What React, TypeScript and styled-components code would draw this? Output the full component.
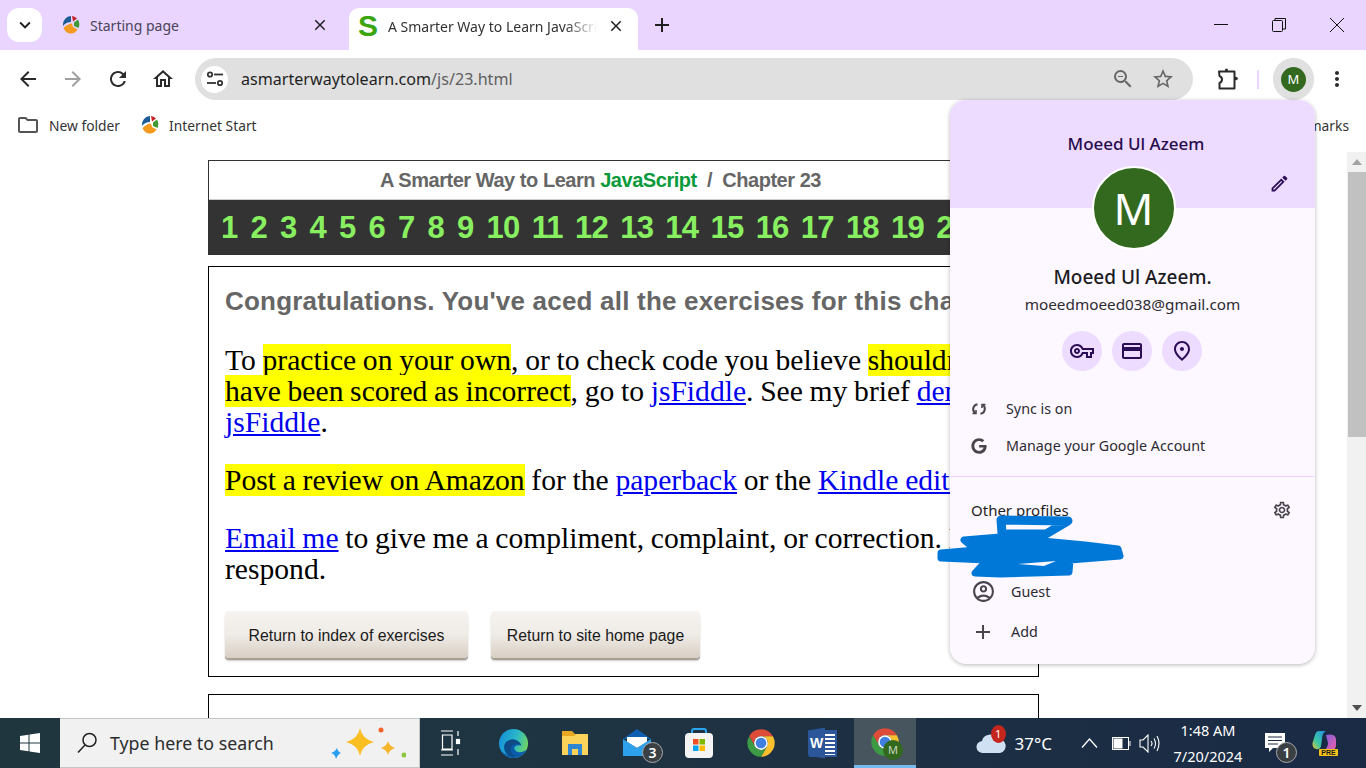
import React from 'react'
import styled, { createGlobalStyle } from 'styled-components'
import {
  MdAdd,
  MdArrowBack,
  MdArrowForward,
  MdClose,
  MdKeyboardArrowDown,
  MdMoreVert,
  MdOutlineAccountCircle,
  MdOutlineCreditCard,
  MdOutlineEdit,
  MdOutlineFolder,
  MdOutlineHome,
  MdOutlinePlace,
  MdOutlineSettings,
  MdOutlineVpnKey,
  MdRefresh,
  MdStarBorder,
  MdZoomOut,
} from 'react-icons/md'
import { FaGoogle } from 'react-icons/fa'

const uiFont = `"Noto Sans", "Open Sans", sans-serif`

const GlobalStyle = createGlobalStyle`
  html, body { margin: 0; padding: 0; height: 100%; overflow: hidden; background: #fff; }
  * { box-sizing: border-box; }
`

const Screen = styled.div`
  position: relative;
  width: 1366px;
  height: 768px;
  overflow: hidden;
  display: flex;
  flex-direction: column;
  font-family: ${uiFont};
`

/* tab strip */
const TabStrip = styled.div`
  height: 50px;
  flex: none;
  background: #e9d5ff;
  display: flex;
  align-items: flex-end;
  padding-left: 7px;
`
const TabSearch = styled.div`
  width: 35px;
  height: 34px;
  margin-bottom: 8px;
  background: #fff;
  border-radius: 12px;
  display: flex;
  align-items: center;
  justify-content: center;
  font-size: 22px;
  color: #1f1f1f;
`
const Tab = styled.div<{ $active?: boolean }>`
  width: ${(p) => (p.$active ? '289px' : '307px')};
  height: 42px;
  display: flex;
  align-items: center;
  padding: ${(p) => (p.$active ? '0 8px 6px 8px' : '0 15px 8px 20px')};
  background: ${(p) => (p.$active ? '#fff' : 'transparent')};
  border-radius: 10px 10px 0 0;
  font-size: 14px;
  color: ${(p) => (p.$active ? '#333' : '#4a4458')};
  flex: none;
`
const TabTitle = styled.span<{ $gap: number }>`
  flex: 1;
  margin-left: ${(p) => p.$gap}px;
  white-space: nowrap;
  overflow: hidden;
`
const FadedTitle = styled(TabTitle)`
  -webkit-mask-image: linear-gradient(90deg, #000 82%, transparent 97%);
  mask-image: linear-gradient(90deg, #000 82%, transparent 97%);
`
const TabClose = styled.span`
  width: 24px;
  height: 24px;
  flex: none;
  margin-right: 2px;
  display: flex;
  align-items: center;
  justify-content: center;
  font-size: 18px;
  color: #222;
`
const SFavicon = styled.span`
  font: bold 30px/30px "Liberation Sans", sans-serif;
  color: #3ba510;
  width: 22px;
  flex: none;
  text-align: center;
`
const NewTab = styled.span`
  margin: 0 0 13px 12px;
  font-size: 24px;
  display: flex;
  color: #1f1f1f;
`
const WindowControls = styled.div`
  margin-left: auto;
  display: flex;
  height: 50px;
  align-items: center;
`
const WindowButton = styled.span`
  width: 58px;
  height: 50px;
  display: flex;
  align-items: center;
  justify-content: center;
  color: #111;
`

/* toolbar */
const Toolbar = styled.div`
  height: 58px;
  flex: none;
  background: #fff;
  display: flex;
  align-items: center;
  padding-left: 5px;
  border-radius: 10px 10px 0 0;
`
const ToolButton = styled.span<{ $w?: number; $muted?: boolean }>`
  width: ${(p) => p.$w ?? 45}px;
  height: 42px;
  flex: none;
  display: flex;
  align-items: center;
  justify-content: center;
  font-size: 24px;
  color: ${(p) => (p.$muted ? '#a0a0a0' : '#2b2b2b')};
`
const Omnibox = styled.div`
  width: 998px;
  height: 42px;
  margin: 0 7px 0 10px;
  flex: none;
  border-radius: 21px;
  background: #e0e0e0;
  display: flex;
  align-items: center;
  padding: 0 18px 0 6px;
`
const SiteChip = styled.span`
  width: 27px;
  height: 27px;
  border-radius: 50%;
  background: #fff;
  flex: none;
  display: flex;
  align-items: center;
  justify-content: center;
`
const UrlText = styled.span`
  margin-left: 13px;
  font-size: 16.1px;
  color: #1f1f1f;
  flex: 1;
  white-space: nowrap;
`
const UrlPath = styled.span`
  color: #5f5f5f;
`
const OmniIcon = styled.span`
  font-size: 24px;
  display: flex;
  color: #666;
  margin-left: 16px;
`
const ToolDivider = styled.span`
  width: 2px;
  height: 19px;
  background: #e9d5ff;
  margin: 0 14px 0 3px;
  flex: none;
`
const AvatarChip = styled.span`
  width: 41px;
  height: 42px;
  border-radius: 21px;
  background: #e0e0e0;
  flex: none;
  display: flex;
  align-items: center;
  justify-content: center;
`
const SmallAvatar = styled.span`
  width: 25px;
  height: 25px;
  border-radius: 50%;
  background: #33691e;
  color: #fff;
  font-size: 13px;
  display: flex;
  align-items: center;
  justify-content: center;
`

/* bookmarks */
const Bookmarks = styled.div`
  height: 34px;
  flex: none;
  background: #fff;
  display: flex;
  align-items: center;
  padding: 0 17px 0 18px;
  font-size: 13.8px;
  color: #333;
`
const Bookmark = styled.span`
  display: flex;
  align-items: center;
  gap: 10px;
  margin-right: 21px;
  white-space: nowrap;
`
const FolderIcon = styled(MdOutlineFolder)`
  font-size: 24px;
  margin: 0 -1px 0 -2px;
  color: #555;
`
const AllBookmarks = styled.span`
  margin-left: auto;
`

/* page */
const Viewport = styled.div`
  flex: 1;
  min-height: 0;
  display: flex;
  background: #fff;
`
const Page = styled.div`
  flex: 1;
  min-width: 0;
  overflow: hidden;
  padding: 18px 0 0 208px;
`
const TitleBox = styled.div`
  width: 831px;
  border: 1px solid #333;
  border-bottom: 0;
  overflow: hidden;
`
const PageTitle = styled.div`
  height: 39px;
  padding-right: 46px;
  text-align: center;
  font: bold 20px/38px "Liberation Sans", sans-serif;
  color: #666;
  letter-spacing: -0.46px;
  border-bottom: 1px solid #ccc;
`
const JsWord = styled.span`
  color: #0a9a3c;
`
const ChapterNav = styled.div`
  height: 55px;
  margin: 0 -1px;
  background: #333;
  display: flex;
  align-items: center;
  gap: 12.25px;
  padding-left: 13px;
  overflow: hidden;
  font: bold 31px/55px "Liberation Sans", sans-serif;
  color: #88f060;
  white-space: nowrap;
`
const ChapterLink = styled.span<{ $wide: boolean }>`
  flex: none;
  letter-spacing: ${(p) => (p.$wide ? '-0.8px' : '0')};
`
const ContentBox = styled.div`
  width: 831px;
  height: 411px;
  margin-top: 11px;
  border: 1px solid #000;
  padding: 18px 16px 0;
`
const CongratsTitle = styled.h2`
  margin: 0 0 28px;
  font: bold 26px/32px "Liberation Sans", sans-serif;
  letter-spacing: 0.2px;
  color: #666;
  white-space: nowrap;
`
const BodyText = styled.p`
  margin: 0 0 27px;
  font: 29.6px/31px "Liberation Serif", serif;
  word-spacing: -0.7px;
  color: #000;
`
const Highlight = styled.span`
  background: #ff0;
`
const PageLink = styled.a`
  color: #00e;
  text-decoration: underline;
`
const ButtonRow = styled.div`
  display: flex;
  gap: 23px;
  margin-top: -1px;
`
const ReturnButton = styled.div<{ $w: number }>`
  width: ${(p) => p.$w}px;
  height: 47px;
  border-radius: 4px;
  background: linear-gradient(#f6f3f0 0%, #efebe6 50%, #d8cfc4 100%);
  box-shadow: 0 2px 0 #a89f93, 0 3px 2px #ccc;
  font: 15.8px/49px "Liberation Sans", sans-serif;
  color: #1a1a1a;
  text-align: center;
`
const NextBox = styled.div`
  width: 831px;
  height: 60px;
  margin-top: 17px;
  border: 1px solid #000;
`

/* scrollbar */
const Scrollbar = styled.div`
  width: 19px;
  flex: none;
  margin-top: 10px;
  background: #f1f1f1;
  display: flex;
  flex-direction: column;
`
const ScrollArrow = styled.div<{ $down?: boolean }>`
  height: 20px;
  flex: none;
  display: flex;
  align-items: center;
  justify-content: center;
  margin-top: ${(p) => (p.$down ? 'auto' : '0')};
  &::after {
    content: '';
    border-left: 5px solid transparent;
    border-right: 5px solid transparent;
    ${(p) => (p.$down ? 'border-top: 6px solid #505050;' : 'border-bottom: 6px solid #a3a3a3;')}
  }
`
const ScrollThumb = styled.div`
  height: 265px;
  margin-left: 1px;
  background: #c1c1c1;
  flex: none;
`

/* profile menu */
const ProfileMenu = styled.div`
  position: absolute;
  left: 950px;
  top: 100px;
  width: 365px;
  height: 564px;
  background: #fdf8ff;
  border-radius: 16px;
  box-shadow: 0 1px 4px rgba(0, 0, 0, 0.28);
  overflow: hidden;
  color: #1f1f1f;
`
const MenuHeader = styled.div`
  position: relative;
  height: 108px;
  background: #eddcff;
  padding: 31px 0 0 7px;
  text-align: center;
  font-size: 17px;
  font-weight: 500;
  line-height: 26px;
  color: #260b4d;
`
const EditIcon = styled(MdOutlineEdit)`
  position: absolute;
  right: 25px;
  top: 73px;
  font-size: 21px;
  color: #2b0d55;
`
const BigAvatar = styled.div`
  width: 84px;
  height: 84px;
  margin: -42px auto 0;
  position: relative;
  left: 1px;
  border-radius: 50%;
  border: 2px solid #fff;
  background: #33691e;
  color: #fff;
  font-size: 44px;
  line-height: 80px;
  text-align: center;
`
const ProfileName = styled.div`
  margin-top: 14px;
  text-align: center;
  font-size: 19px;
  font-weight: 500;
  line-height: 26px;
  color: #1c1b1f;
`
const ProfileEmail = styled.div`
  margin-top: 3px;
  text-align: center;
  font-size: 15.3px;
  line-height: 22px;
  color: #2d2b32;
`
const ActionRow = styled.div`
  margin-top: 16px;
  padding-right: 2px;
  display: flex;
  justify-content: center;
  gap: 10px;
`
const ActionButton = styled.span`
  width: 40px;
  height: 40px;
  border-radius: 50%;
  background: #eddcff;
  display: flex;
  align-items: center;
  justify-content: center;
  font-size: 24px;
  color: #2b0d55;
`
const MenuList = styled.div`
  margin-top: 19px;
`
const MenuRow = styled.div`
  height: 37px;
  display: flex;
  align-items: center;
  padding-left: 21px;
  font-size: 14.3px;
  color: #2d2b32;
`
const RowIcon = styled.span<{ $w: number; $size?: number }>`
  width: ${(p) => p.$w}px;
  flex: none;
  display: flex;
  color: #49454f;
  font-size: ${(p) => p.$size ?? 22}px;
`
const MenuDivider = styled.div`
  height: 1px;
  margin-top: 12px;
  background: #e9d5ff;
`
const ProfilesHead = styled.div`
  height: 20px;
  margin-top: 23px;
  padding: 0 23px 0 21px;
  display: flex;
  align-items: center;
  justify-content: space-between;
  font-size: 15px;
  color: #1f1f1f;
`
const GearIcon = styled(MdOutlineSettings)`
  font-size: 20px;
  color: #49454f;
`
const ProfileRows = styled.div`
  margin-top: 53px;
  display: flex;
  flex-direction: column;
  gap: 3px;
`

const Scribble = styled.svg`
  position: absolute;
  left: 930px;
  top: 510px;
  width: 200px;
  height: 75px;
`

/* taskbar */
const Taskbar = styled.div`
  height: 50px;
  flex: none;
  display: flex;
  align-items: stretch;
  background: linear-gradient(90deg, #20363f 0%, #1f3442 40%, #1a2a45 100%);
  color: #fff;
`
const StartButton = styled.div`
  width: 60px;
  flex: none;
  display: flex;
  align-items: center;
  justify-content: center;
`
const SearchBox = styled.div`
  position: relative;
  width: 360px;
  flex: none;
  background: #f1f1f1;
  border: solid #c5c5c5;
  border-width: 1px 1px 1px 0;
  display: flex;
  align-items: center;
  padding-left: 15px;
  color: #2c2c2c;
  font-size: 17.8px;
`
const SearchText = styled.span`
  margin-left: 11px;
  white-space: nowrap;
`
const Sparkles = styled.svg`
  position: absolute;
  left: 268px;
  top: 6px;
  width: 78px;
  height: 40px;
`
const TaskSlot = styled.div<{ $active?: boolean }>`
  position: relative;
  width: 62px;
  flex: none;
  display: flex;
  align-items: center;
  justify-content: center;
  background: ${(p) => (p.$active ? '#47555f' : 'transparent')};
  border-bottom: ${(p) => (p.$active ? '3px solid #76b9ed' : '0')};
`
const CountBadge = styled.span<{ $right: number; $bottom: number }>`
  position: absolute;
  right: ${(p) => p.$right}px;
  bottom: ${(p) => p.$bottom}px;
  width: 21px;
  height: 21px;
  border-radius: 50%;
  background: #3a3f44;
  border: 1px solid #aaa;
  font-size: 14px;
  font-weight: 600;
  line-height: 19px;
  text-align: center;
  color: #fff;
`
const ChromeAvatar = styled.span`
  position: absolute;
  left: 29px;
  top: 22px;
  width: 20px;
  height: 20px;
  border-radius: 50%;
  background: #33691e;
  color: #c8d8c0;
  font-size: 11px;
  line-height: 20px;
  text-align: center;
`
const Tray = styled.div`
  margin-left: auto;
  display: flex;
  align-items: center;
  padding-right: 28px;
`
const Weather = styled.div`
  position: relative;
  display: flex;
  align-items: center;
  gap: 9px;
  font-size: 17px;
  margin-right: 29px;
`
const WeatherBadge = styled.span`
  position: absolute;
  left: 16px;
  top: -7px;
  width: 15px;
  height: 18px;
  border-radius: 50%;
  background: #c4261d;
  font-size: 11px;
  line-height: 18px;
  text-align: center;
`
const TrayIcon = styled.span<{ $gap: number }>`
  display: flex;
  margin-right: ${(p) => p.$gap}px;
`
const Clock = styled.div`
  width: 70px;
  margin-left: 13px;
  text-align: center;
  font-size: 14.5px;
  line-height: 26px;
  white-space: nowrap;
`
const Notice = styled.div`
  position: relative;
  margin: 0 27px 0 22px;
  display: flex;
`
const CopilotMark = styled.span`
  position: relative;
  width: 26px;
  height: 26px;
  display: block;
`
const PreBadge = styled.span`
  position: absolute;
  right: 0;
  bottom: 0;
  width: 19px;
  height: 7px;
  border-radius: 1px;
  background: #f7c21a;
  font: bold 7px/7px "Liberation Sans", sans-serif;
  color: #1a1a1a;
  text-align: center;
`

const BallIcon = () => (
  <svg width="18" height="20" viewBox="0 0 18 20">
    <path d="M1 11 A8 9 0 0 1 9 1 L9 7 Q4 7 1 11Z" fill="#1c5d96" />
    <path d="M10 1 A8 9 0 0 1 15 3.500 L11 6.500Z" fill="#c8232c" />
    <path d="M16 4.500 A8 9 0 0 1 16.500 13 L12 11 L12 7.500Z" fill="#3f9a35" />
    <path d="M1.500 13 Q6 8.500 10 8.500 L11 12 L15.500 14.500 A8 9 0 0 1 1.500 13Z" fill="#f39a1f" />
  </svg>
)

const ChromeLogo = ({ size = 30 }: { size?: number }) => (
  <svg width={size} height={size} viewBox="0 0 48 48">
    <path d="M24 2A22 22 0 0 0 5 13L14.500 29.500A11 11 0 0 1 24 13H43A22 22 0 0 0 24 2Z" fill="#dd4b39" />
    <path d="M43 13H24A11 11 0 0 1 33.500 29.500L24 46A22 22 0 0 0 43 13Z" fill="#fbc02d" />
    <path d="M5 13A22 22 0 0 0 24 46L33.500 29.500A11 11 0 0 1 14.500 29.500Z" fill="#3d9b45" />
    <circle cx="24" cy="24" r="11" fill="#fff" />
    <circle cx="24" cy="24" r="8.500" fill="#3f7fe0" />
  </svg>
)

const EdgeLogo = () => (
  <svg width="31" height="31" viewBox="0 0 32 32">
    <defs>
      <linearGradient id="edgeTop" x1="0" y1="0.300" x2="1" y2="0.600">
        <stop offset="0" stopColor="#1490d8" />
        <stop offset="0.550" stopColor="#2bb8c8" />
        <stop offset="1" stopColor="#74d85c" />
      </linearGradient>
    </defs>
    <circle cx="16" cy="16" r="15" fill="url(#edgeTop)" />
    <path d="M1 16C1 25 8 31 16 31C22 31 27 28 30 22C25 26 19 26 17 22C16 19 19 17 24 18C22 12 14 10 9 14C5 17 5 24 10 28C5 26 1 22 1 16Z" fill="#0b5cab" />
    <path d="M24 18C22 12 14 10 9 14C6 17 6 23 10 27C12 29 16 30 18 29C13 27 12 22 14 19C16 16 21 16 24 18Z" fill="#0d4a86" />
  </svg>
)

const FolderLogo = () => (
  <svg width="28" height="28" viewBox="0 0 28 28">
    <path d="M1 2H11L14 5H27V26H1Z" fill="#e8a920" />
    <path d="M1 7H13L15 5H27V26H1Z" fill="#fbd25a" />
    <path d="M7 26V15H21V26H17V20H11V26Z" fill="#2f86d4" />
  </svg>
)

const MailLogo = () => (
  <svg width="30" height="30" viewBox="0 0 30 30">
    <path d="M1 11L15 1L29 11Z" fill="#0f5fb0" />
    <path d="M5 9H25V14L15 20L5 14Z" fill="#fff" />
    <path d="M1 11L15 20L29 11V28H1Z" fill="#2da1ec" />
  </svg>
)

const StoreLogo = () => (
  <svg width="30" height="30" viewBox="0 0 30 30">
    <path d="M8 7V3Q8 1 10 1H20Q22 1 22 3V7" fill="none" stroke="#2aa5ee" strokeWidth="2" />
    <rect x="1" y="5" width="28" height="25" rx="4" fill="#f4f4f4" />
    <rect x="9" y="11" width="5.500" height="5.500" fill="#f25022" />
    <rect x="15.500" y="11" width="5.500" height="5.500" fill="#7fba00" />
    <rect x="9" y="17.500" width="5.500" height="5.500" fill="#00a4ef" />
    <rect x="15.500" y="17.500" width="5.500" height="5.500" fill="#ffb900" />
  </svg>
)

const WordLogoBox = styled.span`
  position: relative;
  width: 28px;
  height: 27px;
  display: block;
  background: repeating-linear-gradient(#fff 0 2px, #2b579a 2px 4px);
  outline: 2px solid #2b579a;
  outline-offset: -2px;
`
const WordLetter = styled.span`
  position: absolute;
  left: -1px;
  top: -2px;
  width: 17px;
  height: 31px;
  background: #2b579a;
  clip-path: polygon(0 3px, 100% 0, 100% 100%, 0 calc(100% - 3px));
  font: bold 14px/31px "Liberation Sans", sans-serif;
  color: #fff;
  text-align: center;
`

const PuzzleGlyph = () => (
  <svg width="24" height="24" viewBox="0 0 24 24" fill="none" stroke="#2b2b2b" strokeWidth="2" strokeLinejoin="round">
    <path d="M4 4.500H19.500V21.500H4.500V16Q7 15 7 12.500Q7 10 4.500 9Z" />
    <circle cx="11.500" cy="3" r="1.500" fill="#2b2b2b" stroke="none" />
    <circle cx="21" cy="11.500" r="1.800" fill="#2b2b2b" stroke="none" />
  </svg>
)

const SyncGlyph = () => (
  <svg width="16" height="16" viewBox="0 0 16 16" fill="none" stroke="#49454f" strokeWidth="2">
    <path d="M6.500 3.200A5 5 0 0 0 4 12" />
    <path d="M9.500 12.800A5 5 0 0 0 12 4" />
    <path d="M1.500 12.500H5V9M14.500 3.500H11V7" strokeWidth="1.600" />
  </svg>
)

const Tune = () => (
  <svg width="18" height="16" viewBox="0 0 18 16" fill="none" stroke="#333" strokeWidth="1.800">
    <circle cx="4" cy="3.500" r="2.200" />
    <path d="M8 3.500H17" />
    <circle cx="14" cy="12" r="2.200" />
    <path d="M1 12H10" />
  </svg>
)

const chapters = Array.from({ length: 24 }, (_, i) => i + 1)

export default function App() {
  return (
    <Screen>
      <GlobalStyle />
      <TabStrip>
        <TabSearch><MdKeyboardArrowDown /></TabSearch>
        <Tab>
          <BallIcon />
          <TabTitle $gap={10}>Starting page</TabTitle>
          <TabClose><MdClose /></TabClose>
        </Tab>
        <Tab $active>
          <SFavicon>S</SFavicon>
          <FadedTitle $gap={9}>A Smarter Way to Learn JavaScript</FadedTitle>
          <TabClose><MdClose /></TabClose>
        </Tab>
        <NewTab><MdAdd /></NewTab>
        <WindowControls>
          <WindowButton>
            <svg width="14" height="2"><rect width="14" height="1" fill="#111" /></svg>
          </WindowButton>
          <WindowButton>
            <svg width="14" height="14" fill="none" stroke="#111">
              <rect x="0.500" y="2.500" width="10" height="11" rx="1" />
              <path d="M3 2.500V.500H13.500V11H11" />
            </svg>
          </WindowButton>
          <WindowButton>
            <svg width="14" height="14" stroke="#111"><path d="M0 0L14 14M14 0L0 14" /></svg>
          </WindowButton>
        </WindowControls>
      </TabStrip>

      <Toolbar>
        <ToolButton><MdArrowBack /></ToolButton>
        <ToolButton $muted><MdArrowForward /></ToolButton>
        <ToolButton><MdRefresh /></ToolButton>
        <ToolButton><MdOutlineHome /></ToolButton>
        <Omnibox>
          <SiteChip><Tune /></SiteChip>
          <UrlText>asmarterwaytolearn.com<UrlPath>/js/23.html</UrlPath></UrlText>
          <OmniIcon><MdZoomOut /></OmniIcon>
          <OmniIcon><MdStarBorder /></OmniIcon>
        </Omnibox>
        <ToolButton $w={54}><PuzzleGlyph /></ToolButton>
        <ToolDivider />
        <AvatarChip><SmallAvatar>M</SmallAvatar></AvatarChip>
        <ToolButton $w={46}><MdMoreVert /></ToolButton>
      </Toolbar>

      <Bookmarks>
        <Bookmark><FolderIcon />New folder</Bookmark>
        <Bookmark><BallIcon />Internet Start</Bookmark>
        <AllBookmarks>All Bookmarks</AllBookmarks>
      </Bookmarks>

      <Viewport>
        <Page>
          <TitleBox>
            <PageTitle>A Smarter Way to Learn <JsWord>JavaScript</JsWord> &nbsp;/&nbsp; Chapter 23</PageTitle>
            <ChapterNav>
              {chapters.map((n) => <ChapterLink key={n} $wide={n > 9}>{n}</ChapterLink>)}
            </ChapterNav>
          </TitleBox>
          <ContentBox>
            <CongratsTitle>Congratulations. You've aced all the exercises for this chapter.</CongratsTitle>
            <BodyText>
              To <Highlight>practice on your own</Highlight>, or to check code you believe <Highlight>shouldn't have been scored as incorrect</Highlight>, go to <PageLink>jsFiddle</PageLink>. See my brief <PageLink>demo of jsFiddle</PageLink>.
            </BodyText>
            <BodyText>
              <Highlight>Post a review on Amazon</Highlight> for the <PageLink>paperback</PageLink> or the <PageLink>Kindle edition</PageLink>.
            </BodyText>
            <BodyText>
              <PageLink>Email me</PageLink> to give me a compliment, complaint, or correction. I'll respond.
            </BodyText>
            <ButtonRow>
              <ReturnButton $w={243}>Return to index of exercises</ReturnButton>
              <ReturnButton $w={209}>Return to site home page</ReturnButton>
            </ButtonRow>
          </ContentBox>
          <NextBox />
        </Page>
        <Scrollbar>
          <ScrollArrow />
          <ScrollThumb />
          <ScrollArrow $down />
        </Scrollbar>
      </Viewport>

      <Taskbar>
        <StartButton>
          <svg width="20" height="20" viewBox="0 0 20 20" fill="#fff">
            <path d="M0 3L8.500 1.800V9.500H0ZM9.500 1.600L20 0V9.500H9.500ZM0 10.500H8.500V18.200L0 17ZM9.500 10.500H20V20L9.500 18.400Z" />
          </svg>
        </StartButton>
        <SearchBox>
          <svg width="24" height="24" viewBox="0 0 24 24" fill="none" stroke="#222" strokeWidth="1.500">
            <circle cx="14.500" cy="9" r="6.500" />
            <path d="M10 14L3 21.500" />
          </svg>
          <SearchText>Type here to search</SearchText>
          <Sparkles viewBox="0 0 78 40">
            <path d="M32 3Q34 14 46 17Q34 20 32 31Q30 20 18 17Q30 14 32 3Z" fill="#fbbf24" />
            <path d="M60 16Q61 21 67 23Q61 25 60 30Q59 25 53 23Q59 21 60 16Z" fill="#f5b52a" />
            <path d="M9 23Q10 27 13 28Q10 29 8 34Q7 29 3 28Q7 27 9 23Z" fill="#2a9ff0" />
            <circle cx="53" cy="5" r="2.500" fill="#f4632a" />
            <circle cx="76" cy="30" r="2.500" fill="#8cc63f" />
          </Sparkles>
        </SearchBox>
        <TaskSlot>
          <svg width="22" height="26" viewBox="0 0 22 26" fill="none" stroke="#fff" strokeWidth="1.200">
            <path d="M1 1H13M1 25H13M1 20H13M2.500 5H12V19H2.500ZM18 1V6M18 19V25" />
            <rect x="16.500" y="9.500" width="3" height="4" fill="#fff" />
          </svg>
        </TaskSlot>
        <TaskSlot><EdgeLogo /></TaskSlot>
        <TaskSlot><FolderLogo /></TaskSlot>
        <TaskSlot>
          <MailLogo />
          <CountBadge $right={5} $bottom={5}>3</CountBadge>
        </TaskSlot>
        <TaskSlot><StoreLogo /></TaskSlot>
        <TaskSlot><ChromeLogo /></TaskSlot>
        <TaskSlot>
          <WordLogoBox><WordLetter>W</WordLetter></WordLogoBox>
        </TaskSlot>
        <TaskSlot $active>
          <ChromeLogo />
          <ChromeAvatar>M</ChromeAvatar>
        </TaskSlot>
        <Tray>
          <Weather>
            <svg width="31" height="22" viewBox="0 0 31 22">
              <path d="M8 21A6 6 0 0 1 7 9A8 8 0 0 1 22 7A7 7 0 0 1 25 21Z" fill="#cfe0f3" />
            </svg>
            <WeatherBadge>1</WeatherBadge>
            37°C
          </Weather>
          <TrayIcon $gap={14}>
            <svg width="17" height="10" fill="none" stroke="#fff" strokeWidth="1.300"><path d="M1 9.500L8.500 1L16 9.500" /></svg>
          </TrayIcon>
          <TrayIcon $gap={8}>
            <svg width="19" height="13" fill="none" stroke="#fff"><rect x="0.500" y="0.500" width="16" height="12" /><rect x="2" y="2" width="8" height="9" fill="#fff" /><path d="M18 4V9" /></svg>
          </TrayIcon>
          <TrayIcon $gap={0}>
            <svg width="21" height="19" viewBox="0 0 21 19" fill="none" stroke="#fff" strokeWidth="1.100">
              <path d="M1 6H4L9 1V18L4 13H1Z" />
              <path d="M12 7Q14 9.500 12 12M15 4.500Q18 9.500 15 14.500M18 2Q22 9.500 18 17" />
            </svg>
          </TrayIcon>
          <Clock>1:48 AM<br />7/20/2024</Clock>
          <Notice>
            <svg width="20" height="20" viewBox="0 0 20 20">
              <path d="M0 0H20V15H8L4 19V15H0Z" fill="#fff" />
              <path d="M3 4H17M3 7.500H17M3 11H13" stroke="#1a2a45" />
            </svg>
            <CountBadge $right={-12} $bottom={-10}>1</CountBadge>
          </Notice>
          <CopilotMark>
            <svg width="26" height="22" viewBox="0 0 26 22">
              <defs>
                <linearGradient id="copLeft" x1="0" y1="1" x2="1" y2="0">
                  <stop offset="0" stopColor="#f2c230" />
                  <stop offset="0.350" stopColor="#3fc8a0" />
                  <stop offset="1" stopColor="#1f8fe8" />
                </linearGradient>
                <linearGradient id="copRight" x1="0" y1="0" x2="1" y2="1">
                  <stop offset="0" stopColor="#7a5fe0" />
                  <stop offset="1" stopColor="#ee5fa8" />
                </linearGradient>
              </defs>
              <path d="M7 1H14Q10 3 10 9L9 16Q8 20 4 19Q0 18 0.500 13L3 5Q4 1 7 1Z" fill="url(#copLeft)" />
              <path d="M14 5Q18 4 21 5Q24 6 24 10V15Q24 20 19 20H12Q16 18 16 13Z" fill="url(#copRight)" />
            </svg>
            <PreBadge>PRE</PreBadge>
          </CopilotMark>
        </Tray>
      </Taskbar>

      <ProfileMenu>
        <MenuHeader>
          Moeed Ul Azeem
          <EditIcon />
        </MenuHeader>
        <BigAvatar>M</BigAvatar>
        <ProfileName>Moeed Ul Azeem.</ProfileName>
        <ProfileEmail>moeedmoeed038@gmail.com</ProfileEmail>
        <ActionRow>
          <ActionButton><MdOutlineVpnKey /></ActionButton>
          <ActionButton><MdOutlineCreditCard /></ActionButton>
          <ActionButton><MdOutlinePlace /></ActionButton>
        </ActionRow>
        <MenuList>
          <MenuRow><RowIcon $w={35}><SyncGlyph /></RowIcon>Sync is on</MenuRow>
          <MenuRow><RowIcon $w={35}><FaGoogle size={16} /></RowIcon>Manage your Google Account</MenuRow>
        </MenuList>
        <MenuDivider />
        <ProfilesHead>Other profiles<GearIcon /></ProfilesHead>
        <ProfileRows>
          <MenuRow><RowIcon $w={40} $size={25}><MdOutlineAccountCircle /></RowIcon>Guest</MenuRow>
          <MenuRow><RowIcon $w={40} $size={24}><MdAdd /></RowIcon>Add</MenuRow>
        </ProfileRows>
      </ProfileMenu>
      <Scribble viewBox="930 510 200 75" fill="none" stroke="#0078d7" strokeLinecap="round" strokeLinejoin="round">
        <path d="M1002 533L1001 520L1068 521L1046 534L1002 534" strokeWidth="9" />
        <path
          d="M964 540L1000 537L1085 545L1118 549L1120 556L1070 560L1069 572L1000 574L975 573L987 560L941 558L941 553L976 550Z"
          fill="#0078d7"
          strokeWidth="7"
        />
        <path d="M1018 564L1056 561L1044 566Z" fill="#fdf8ff" stroke="none" />
      </Scribble>
    </Screen>
  )
}
